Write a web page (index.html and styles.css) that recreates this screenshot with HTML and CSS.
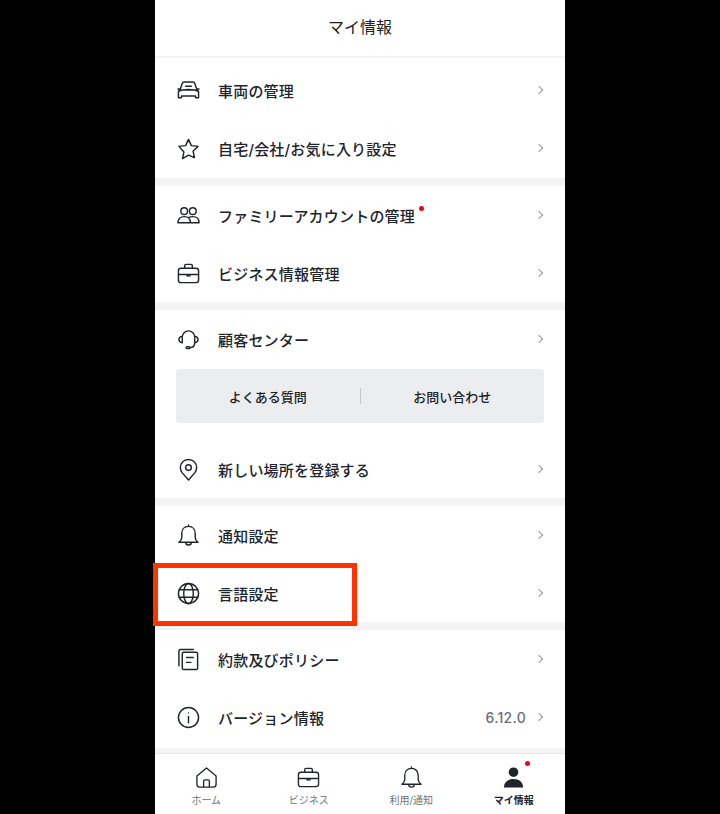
FILE: index.html
```html
<!DOCTYPE html>
<html lang="ja">
<head>
    <meta charset="UTF-8">
    <meta name="viewport" content="width=device-width, initial-scale=1.0">
    <title>マイ情報</title>
    <link rel="stylesheet" href="styles.css">
</head>
<body>
    <div class="phone">
        <header class="top-bar">マイ情報</header>

        <section class="group group-first">
            <div class="row">
                <svg class="icon" viewBox="0 0 24 24"><path d="M1 10.5h2.5M23 10.5h-2.500M3.500 10.500 5.500 4.500a2 2 0 0 1 1.900-1.400h9.200a2 2 0 0 1 1.900 1.400l2 6M3.500 10.500 1.500 13v6.500h3.200v-1.700h14.600v1.700h3.200V13l-2-2.500M1.500 13c5-2.600 16-2.600 21 0M9 7.500h6M9 11.500h6"/></svg>
                <span class="label">車両の管理</span>
                <span class="chevron"></span>
            </div>
            <div class="row">
                <svg class="icon" viewBox="0 0 24 24"><path d="M12 2.500 15 9l7 .8-5.200 4.800 1.400 7L12 19l-6.200 3.600 1.400-7L2 9.800 9 9z"/></svg>
                <span class="label">自宅/会社/お気に入り設定</span>
                <span class="chevron"></span>
            </div>
        </section>

        <section class="group">
            <div class="row">
                <svg class="icon" viewBox="0 0 24 24"><circle cx="7.500" cy="7.500" r="3.500"/><circle cx="16.500" cy="7.500" r="3.500"/><path d="M1 19.500c0-4 2.700-6.300 6.500-6.300s6.500 2.300 6.500 6.300zM12.500 14c1-.5 2.400-.8 4-.8 3.800 0 6.500 2.300 6.500 6.300h-9"/></svg>
                <span class="label">ファミリーアカウントの管理<i class="dot dot-label"></i></span>
                <span class="chevron"></span>
            </div>
            <div class="row">
                <svg class="icon" viewBox="0 0 24 24"><rect x="1.500" y="6.500" width="21" height="15" rx="2.500"/><path d="M8 6.500V4a1.500 1.500 0 0 1 1.500-1.500h5A1.500 1.500 0 0 1 16 4v2.500M1.500 13h21M10.500 13v1.500h3V13"/></svg>
                <span class="label">ビジネス情報管理</span>
                <span class="chevron"></span>
            </div>
        </section>

        <section class="group">
            <div class="row">
                <svg class="icon" viewBox="0 0 24 24"><path d="M5.500 15V9.500a6.500 6.500 0 0 1 13 0V15M5.500 8.500C3.500 9 2 10.500 2 12s1.500 3 3.500 3.500M18.500 8.500c2 .5 3.500 2 3.500 3.500s-1.500 3-3.500 3.500M18.500 15.500c0 3-2 5-5 5"/><rect x="9.500" y="19.500" width="4" height="2" rx="1"/></svg>
                <span class="label">顧客センター</span>
                <span class="chevron"></span>
            </div>
            <div class="split-box">
                <span class="split-item">よくある質問</span>
                <span class="split-line"></span>
                <span class="split-item">お問い合わせ</span>
            </div>
            <div class="row row-after-box">
                <svg class="icon" viewBox="0 0 24 24"><path d="M12 23 5.500 15.500A9 9 0 0 1 3.500 10a8.500 8.500 0 0 1 17 0 9 9 0 0 1-2 5.500z"/><circle cx="12" cy="10" r="3"/></svg>
                <span class="label">新しい場所を登録する</span>
                <span class="chevron"></span>
            </div>
        </section>

        <section class="group">
            <div class="row">
                <svg class="icon" viewBox="0 0 24 24"><path d="M12 2.500c-4.500 0-7 3.300-7 7.500v4c0 2-1.200 3.500-3 5h20c-1.800-1.500-3-3-3-5v-4c0-4.200-2.500-7.500-7-7.500zM12 1v1.500M9 19c0 4 6 4 6 0"/></svg>
                <span class="label">通知設定</span>
                <span class="chevron"></span>
            </div>
            <div class="row">
                <svg class="icon" viewBox="0 0 24 24"><circle cx="12" cy="12" r="10.500"/><ellipse cx="12" cy="12" rx="5" ry="10.500"/><path d="M2.500 8h19M2.500 16h19"/></svg>
                <span class="label">言語設定</span>
                <span class="chevron"></span>
            </div>
        </section>

        <section class="group group-last">
            <div class="row">
                <svg class="icon" viewBox="0 0 24 24"><rect x="5.500" y="4.500" width="16" height="18" rx="1.500"/><path d="M2 18.500V3a1.500 1.500 0 0 1 1.500-1.500H17M10 10h7M10 15h4.500"/></svg>
                <span class="label">約款及びポリシー</span>
                <span class="chevron"></span>
            </div>
            <div class="row">
                <svg class="icon" viewBox="0 0 24 24"><circle cx="12" cy="12" r="10.500"/><path d="M12 11v6.500"/><circle class="icon-fill" cx="12" cy="7.300" r=".7"/></svg>
                <span class="label">バージョン情報</span>
                <span class="version">6.12.0</span>
                <span class="chevron"></span>
            </div>
        </section>

        <nav class="tab-bar">
            <div class="tab">
                <svg class="tab-icon" viewBox="0 0 24 24"><path d="M12 2 2 10.500V19a3 3 0 0 0 3 3h14a3 3 0 0 0 3-3v-8.500zM9 22v-6a1.500 1.500 0 0 1 1.500-1.500h3A1.500 1.500 0 0 1 15 16v6"/></svg>
                <span>ホーム</span>
            </div>
            <div class="tab">
                <svg class="tab-icon" viewBox="0 0 24 24"><rect x="1.500" y="6.500" width="21" height="15" rx="2.500"/><path d="M8 6.500V4a1.500 1.500 0 0 1 1.500-1.500h5A1.500 1.500 0 0 1 16 4v2.500M1.500 13h21M10.500 13v1.500h3V13"/></svg>
                <span>ビジネス</span>
            </div>
            <div class="tab">
                <svg class="tab-icon" viewBox="0 0 24 24"><path d="M12 2.500c-4.500 0-7 3.300-7 7.500v4c0 2-1.200 3.500-3 5h20c-1.800-1.500-3-3-3-5v-4c0-4.200-2.500-7.500-7-7.500zM12 1v1.500M9 19c0 4 6 4 6 0"/></svg>
                <span>利用/通知</span>
            </div>
            <div class="tab tab-active">
                <svg class="tab-icon" viewBox="0 0 24 24"><circle class="icon-fill" cx="12" cy="6.500" r="5"/><path class="icon-fill" d="M2 22.500c0-5.500 4-9 10-9s10 3.500 10 9z"/></svg>
                <i class="dot dot-tab"></i>
                <span>マイ情報</span>
            </div>
        </nav>

        <div class="highlight"></div>
    </div>
</body>
</html>
```

FILE: styles.css
```css
* {
    margin: 0;
    padding: 0;
    box-sizing: border-box;
}

html, body {
    height: 814px;
    overflow: hidden;
}

body {
    background: #000;
    font-family: "Inter", "Noto Sans CJK JP", sans-serif;
    color: #20242c;
}

.phone {
    position: relative;
    width: 410px;
    height: 814px;
    margin: 0 auto;
    background: #f4f4f5;
    display: flex;
    flex-direction: column;
    gap: 8px;
}

.top-bar {
    height: 57px;
    margin-bottom: -8px;
    background: #fff;
    border-bottom: 1px solid #f2f2f2;
    display: flex;
    align-items: center;
    justify-content: center;
    padding-bottom: 4px;
    font-size: 16px;
    color: #1c1f26;
}

.group {
    background: #fff;
}

.group-first {
    margin-top: 1px;
    padding: 3px 0 1px;
}

.group-last {
    padding-bottom: 2px;
}

.row {
    height: 58px;
    display: flex;
    align-items: center;
    padding: 0 21px 0 22px;
}

.row-after-box {
    margin-top: 17px;
}

.icon {
    width: 23px;
    height: 23px;
    margin-right: 18px;
    fill: none;
    stroke: #20242c;
    stroke-width: 1.5;
    stroke-linejoin: round;
    stroke-linecap: round;
    flex-shrink: 0;
}

.icon-fill {
    fill: #20242c;
    stroke: none;
}

.label {
    position: relative;
    font-size: 15px;
    font-weight: 500;
    letter-spacing: .2px;
    flex: 0 1 auto;
}

.version {
    margin-left: auto;
    font-size: 14px;
    font-weight: 500;
    letter-spacing: .3px;
    color: #6b6f76;
}

.chevron {
    width: 6px;
    height: 6px;
    margin-left: auto;
    margin-right: 2px;
    border-top: 1px solid #999;
    border-right: 1px solid #999;
    transform: rotate(45deg);
}

.version + .chevron {
    margin-left: 10px;
}

.dot {
    position: absolute;
    width: 5px;
    height: 5px;
    border-radius: 50%;
    background: #f0001c;
}

.dot-label {
    top: 1px;
    right: -9px;
}

.dot-tab {
    top: 7px;
    right: 35px;
}

.split-box {
    height: 54px;
    margin: 1px 21px 0;
    background: #ecedef;
    border-radius: 4px;
    display: flex;
    align-items: center;
}

.split-item {
    flex: 1;
    text-align: center;
    font-size: 13px;
    font-weight: 500;
}

.split-line {
    width: 1px;
    height: 16px;
    background: #c4c6ca;
}

.tab-bar {
    margin-top: -3px;
    flex: 1;
    background: #fff;
    border-top: 1px solid #e6e7e9;
    display: grid;
    grid-template-columns: repeat(4, 1fr);
}

.tab {
    position: relative;
    display: flex;
    flex-direction: column;
    align-items: center;
    padding-top: 12px;
    font-size: 10px;
    color: #6f7278;
}

.tab-icon {
    width: 23px;
    height: 23px;
    margin-bottom: 3px;
    fill: none;
    stroke: #20242c;
    stroke-width: 1.4;
    stroke-linejoin: round;
    stroke-linecap: round;
}

.tab-active {
    color: #20242c;
    font-weight: 700;
}

.highlight {
    position: absolute;
    left: -2px;
    top: 563px;
    width: 204px;
    height: 63px;
    border: 5px solid #ff3300;
}
```
